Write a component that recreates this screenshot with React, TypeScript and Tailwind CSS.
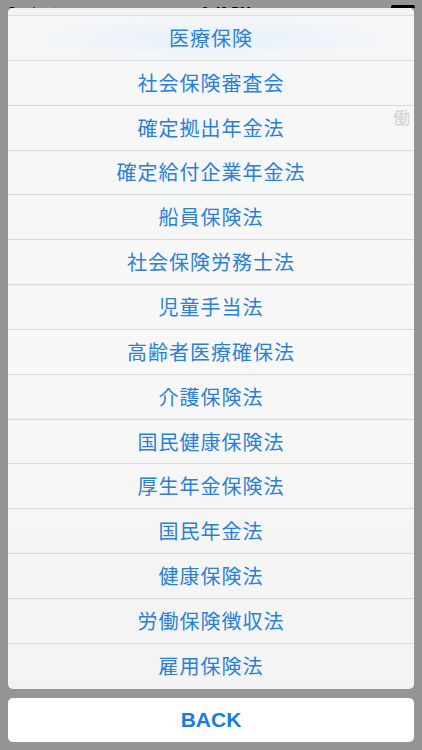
import { FunctionComponent, JSX } from "react";

const ITEMS = [
  "医療保険",
  "社会保険審査会",
  "確定拠出年金法",
  "確定給付企業年金法",
  "船員保険法",
  "社会保険労務士法",
  "児童手当法",
  "高齢者医療確保法",
  "介護保険法",
  "国民健康保険法",
  "厚生年金保険法",
  "国民年金法",
  "健康保険法",
  "労働保険徴収法",
  "雇用保険法",
];

const App: FunctionComponent = (): JSX.Element => {
  return (
    <div className="relative w-[422px] h-[750px] bg-[#959595] flex flex-col overflow-hidden font-['Noto_Sans_CJK_JP',sans-serif]">
      <div className="relative w-full h-[8px] overflow-hidden flex flex-row justify-between items-start px-[7px] text-[13px] leading-[13px] text-black font-['Liberation_Sans',sans-serif]">
        <div className="relative w-fit h-fit flex pt-[5px]">Carrier ⊙</div>
        <div className="relative w-fit h-fit flex pt-[5px] font-semibold">9:42 PM</div>
        <div className="relative w-[24px] h-[12px] mt-[5px] border-2 border-black rounded-[2px] bg-black"></div>
      </div>
      <div className="relative mx-[8px] w-[406px] h-fit flex flex-col rounded-[5px] overflow-hidden bg-gradient-to-b from-[#f5f6f7] via-[#f8f8f8] to-[#f3f3f3]">
        <div className="relative w-full h-[8px] bg-[#f3f4f5] border-b border-[#dedede]"></div>
        {ITEMS.map((item, i) => (
          <div
            key={item}
            className={`relative w-full h-[44.85px] flex items-center justify-center text-[20px] tracking-[1px] text-[#2a7fd9] ${
              i < ITEMS.length - 1 ? "border-b border-[#d9d9d9]" : ""
            } ${i === 0 ? "bg-[radial-gradient(ellipse_at_center,#e4f0fb_0%,#f4f6f8_60%)]" : ""}`}
          >
            {item}
            {i === 2 && (
              <div className="absolute right-[3px] top-[-2px] text-[17px] text-[#d3d3d3]">働</div>
            )}
          </div>
        ))}
      </div>
      <div className="relative mx-[8px] mt-[9px] w-[406px] h-[44px] flex items-center justify-center bg-white rounded-[5px] font-['Liberation_Sans',sans-serif] font-bold text-[21px] text-[#1a7be6]">
        BACK
      </div>
    </div>
  );
};

export default App;
